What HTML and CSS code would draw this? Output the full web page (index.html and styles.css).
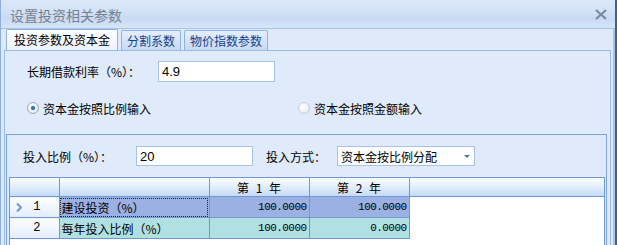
FILE: index.html
```html
<!DOCTYPE html>
<html lang="zh-CN">

<head>
    <meta charset="UTF-8">
    <title>设置投资相关参数</title>
    <link rel="stylesheet" href="styles.css">
</head>

<body>
    <div class="window">
        <div class="titlebar">
            <span class="title">设置投资相关参数</span>
            <svg class="close" width="12" height="11" viewBox="0 0 12 11">
                <path d="M1 1 L11 10 M11 1 L1 10" stroke="#7d8898" stroke-width="2.2" fill="none" />
            </svg>
        </div>

        <div class="tabs">
            <div class="tab active">投资参数及资本金</div>
            <div class="tab">分割系数</div>
            <div class="tab">物价指数参数</div>
        </div>

        <div class="tab-body">
            <div class="top-panel">
                <div class="field-row">
                    <span class="label rate-label">长期借款利率（%）：</span>
                    <div class="input rate-input">4.9</div>
                </div>
                <div class="radio-row">
                    <div class="radio-item first">
                        <span class="radio checked"></span>
                        <span>资本金按照比例输入</span>
                    </div>
                    <div class="radio-item">
                        <span class="radio"></span>
                        <span>资本金按照金额输入</span>
                    </div>
                </div>
            </div>

            <div class="bottom-panel">
                <div class="field-row">
                    <span class="label ratio-label">投入比例（%）：</span>
                    <div class="input ratio-input">20</div>
                    <span class="label mode-label">投入方式：</span>
                    <div class="input select">
                        <span>资本金按比例分配</span>
                        <span class="arrow"></span>
                    </div>
                </div>

                <div class="grid-box">
                    <table class="grid">
                        <colgroup>
                            <col class="c-head">
                            <col class="c-name">
                            <col class="c-year">
                            <col class="c-year">
                            <col>
                        </colgroup>
                        <thead>
                            <tr>
                                <th class="rowhead"></th>
                                <th></th>
                                <th>第 1 年</th>
                                <th>第 2 年</th>
                                <th class="last"></th>
                            </tr>
                        </thead>
                        <tbody>
                            <tr class="row-a">
                                <td class="rowhead">
                                    <svg class="current" width="6" height="9" viewBox="0 0 6 9">
                                        <path d="M1 0.5 L5 4.5 L1 8.5" stroke="#6a9ad6" stroke-width="2" fill="none" />
                                    </svg>
                                    1
                                </td>
                                <td class="name focus">建设投资（%）</td>
                                <td class="num">100.0000</td>
                                <td class="num">100.0000</td>
                                <td class="empty"></td>
                            </tr>
                            <tr class="row-b">
                                <td class="rowhead">2</td>
                                <td class="name">每年投入比例（%）</td>
                                <td class="num">100.0000</td>
                                <td class="num">0.0000</td>
                                <td class="empty"></td>
                            </tr>
                        </tbody>
                    </table>
                </div>
            </div>
        </div>
    </div>
</body>

</html>
```

FILE: styles.css
```css
html,
body {
    margin: 0;
    padding: 0;
    width: 617px;
    height: 245px;
    overflow: hidden;
    background: #dfe8f6;
    font-family: "Noto Sans CJK SC", "DejaVu Sans", sans-serif;
    font-size: 12px;
    color: #000;
}

.window {
    width: 617px;
    height: 245px;
    box-sizing: border-box;
    border-left: 1px solid #8fb0dc;
    border-right: 2px solid #3d6193;
    box-shadow: inset -2px 0 0 #a9c4e8;
    background: #dfe9f8;
    display: flex;
    flex-direction: column;
}

.titlebar {
    height: 28px;
    flex: none;
    border-bottom: 1px solid #a5c3ea;
    background: linear-gradient(#dce8f8 0%, #d3e3f7 35%, #c8daf3 65%, #d6e5f8 100%);
    display: flex;
    align-items: center;
    justify-content: space-between;
    padding: 0 9px 0 9px;
}

.title {
    font-size: 14px;
    color: #76818f;
    margin-top: 1px;
}

.close {
    margin-top: 1px;
    margin-right: -1px;
}

.tabs {
    height: 21px;
    flex: none;
    display: flex;
    gap: 3px;
    padding-left: 5px;
    align-items: flex-end;
}

.tab {
    height: 20px;
    box-sizing: border-box;
    border: 1px solid #8eb2e2;
    border-bottom: none;
    border-radius: 2px 2px 0 0;
    padding: 0 5px;
    line-height: 19px;
    color: #15428b;
    background: linear-gradient(#e6eefa 0%, #d5e3f6 50%, #c7d9f2 100%);
}

.tab.active {
    height: 21px;
    color: #000;
    padding: 0 7px;
    background: linear-gradient(#ffffff 0%, #f3f7fd 60%, #e9f0fb 100%);
}

.tab-body {
    flex: 1;
    margin: 0 4px 0 3px;
    border: 1px solid #99bbe8;
    border-bottom: none;
    background: #dfeafa;
    display: flex;
    flex-direction: column;
}

.top-panel {
    height: 83px;
    flex: none;
    box-sizing: border-box;
    padding: 10px 0 0 22px;
}

.field-row {
    display: flex;
    align-items: center;
    height: 21px;
}

.label {
    flex: none;
}

.rate-label {
    width: 131px;
}

.input {
    height: 100%;
    box-sizing: border-box;
    background: #fff;
    border: 1px solid #a9c3e6;
    padding-left: 3px;
    line-height: 19px;
    font-size: 13px;
    font-family: "Liberation Sans", sans-serif;
}

.rate-input {
    width: 117px;
}

.radio-row {
    display: flex;
    margin-top: 18px;
    height: 16px;
    align-items: center;
}

.radio-item {
    display: flex;
    align-items: center;
    gap: 4px;
}

.radio-item.first {
    width: 271px;
}

.radio {
    width: 12px;
    height: 12px;
    box-sizing: border-box;
    border-radius: 50%;
    border: 1px solid #c4ced9;
    background: radial-gradient(circle at 40% 35%, #ffffff 0%, #edf1f5 60%, #d7dde4 100%);
    position: relative;
}

.radio.checked {
    border-color: #9aa9bb;
}

.radio.checked::after {
    content: "";
    position: absolute;
    left: 3px;
    top: 3px;
    width: 4px;
    height: 4px;
    border-radius: 50%;
    background: #2d6fb8;
    box-shadow: 0 0 1px #5f9ce0;
}

.bottom-panel {
    flex: 1;
    margin: 0 3px 0 1px;
    border: 1px solid #7da3d8;
    border-bottom: none;
    padding: 11px 0 0 1px;
    display: flex;
    flex-direction: column;
}

.bottom-panel .field-row {
    height: 20px;
    flex: none;
    padding-left: 15px;
}

.ratio-label {
    width: 113px;
}

.ratio-input {
    width: 117px;
}

.mode-label {
    width: 71px;
    margin-left: 13px;
}

.select {
    width: 138px;
    display: flex;
    justify-content: space-between;
    align-items: center;
    font-family: "Noto Sans CJK SC", sans-serif;
    font-size: 12px;
    padding-right: 4px;
}

.arrow {
    width: 0;
    height: 0;
    border-left: 3px solid transparent;
    border-right: 3px solid transparent;
    border-top: 3px solid #4c6ea6;
}

.grid-box {
    flex: 1;
    margin: 11px 1px 0 1px;
    background: #fff;
    border: 1px solid #6d9ad6;
    border-bottom: none;
}

.grid {
    width: 100%;
    border-collapse: collapse;
    table-layout: fixed;
}

.c-head {
    width: 49px;
}

.c-name {
    width: 150px;
}

.c-year {
    width: 100px;
}

.grid th {
    height: 18px;
    padding: 0;
    font-weight: normal;
    border-right: 1px solid #6d9ad6;
    border-bottom: 1px solid #6d9ad6;
    background: linear-gradient(#fbfdff 0%, #e4eefb 45%, #c6dbf6 100%);
    font-size: 12px;
    line-height: 17px;
    text-align: center;
    word-spacing: 4px;
}

.grid th.last {
    border-right: none;
}

.grid td {
    height: 20px;
    padding: 0 2px;
    border-right: 1px solid #6d9ad6;
    border-bottom: 1px solid #6d9ad6;
    line-height: 19px;
    white-space: nowrap;
}

.grid td.rowhead {
    position: relative;
    text-align: center;
    padding-left: 7px;
    background: linear-gradient(#fbfdff 0%, #eef4fd 60%, #e2ecfa 100%);
    font-family: "Liberation Mono", monospace;
    font-size: 12px;
}

.current {
    position: absolute;
    left: 6px;
    top: 6px;
}

.grid td.num {
    text-align: right;
    font-family: "Liberation Mono", monospace;
    font-size: 11px;
    letter-spacing: -0.55px;
    padding-right: 2px;
}

.grid td.name {
    font-size: 12px;
}

.row-a td.name,
.row-a td.num {
    background: #9bb0e3;
}

.row-b td.name,
.row-b td.num {
    background: #b1e0e3;
}

.grid td.focus {
    outline: 1px dotted #222;
    outline-offset: -2px;
}

.grid td.empty {
    border: none;
    background: #fff;
}
```
